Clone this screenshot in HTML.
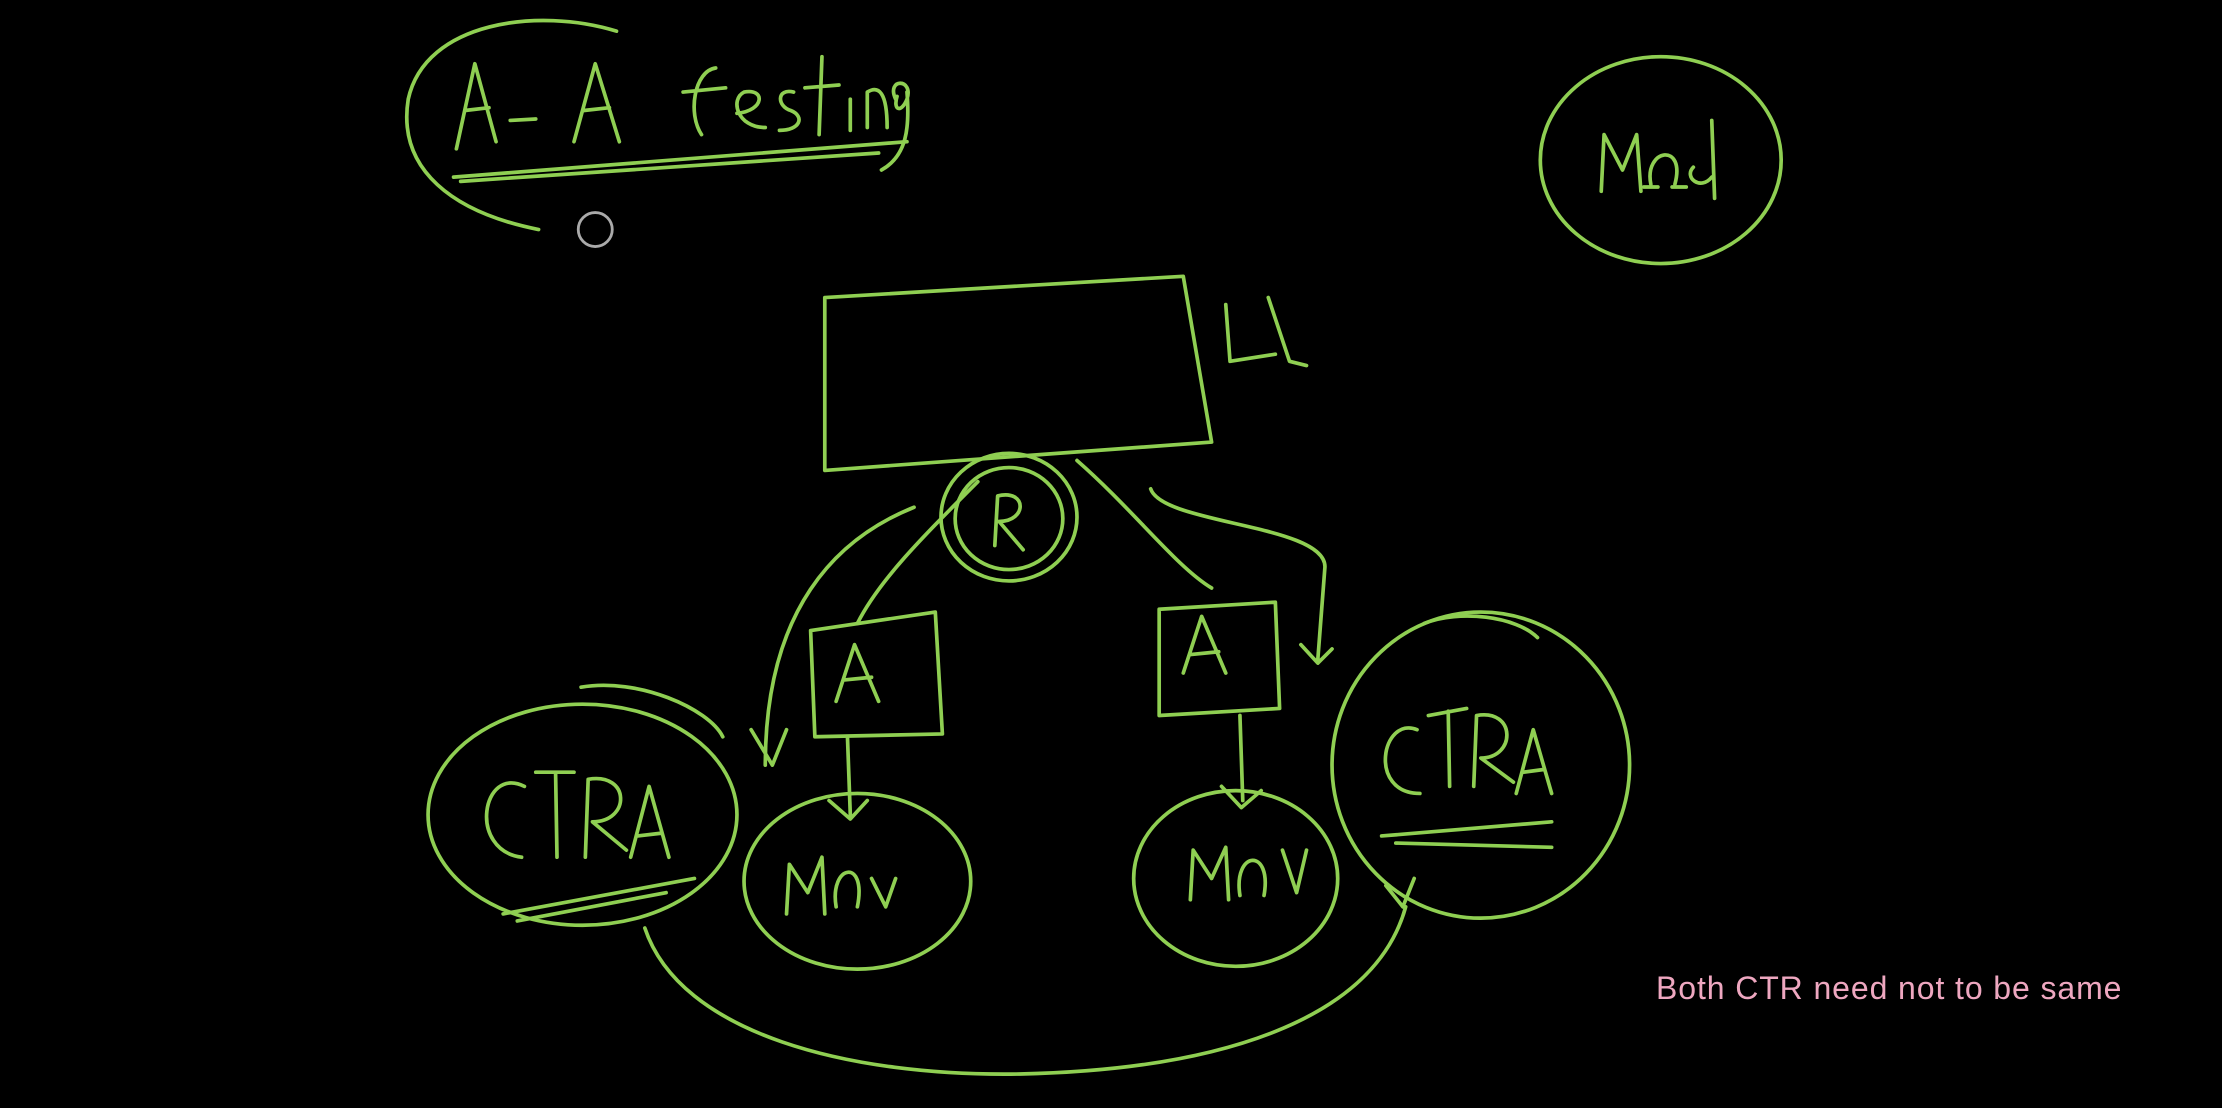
<!DOCTYPE html>
<html><head><meta charset="utf-8"><style>
html,body{margin:0;padding:0;background:#000;width:2222px;height:1108px;overflow:hidden;position:relative}
svg{position:absolute;left:0;top:0}
.t{position:absolute;left:1656px;top:970px;font:32px "Liberation Sans",sans-serif;color:#eea7c0;white-space:nowrap;letter-spacing:0.9px}
</style></head><body>
<svg width="2222" height="1108" viewBox="0 0 1568 782" fill="none" stroke="#8fcf52" stroke-width="2.6" stroke-linecap="round" stroke-linejoin="round">
<path d="M435 22 C380 5 300 15 288 70 C280 120 320 150 380 162"/>
<path d="M322 105 L335 45 L350 100 M328 78 L345 76"/>
<path d="M360 85 L378 84"/>
<path d="M405 100 L420 45 L437 100 M412 78 L430 76"/>
<path d="M495 95 C485 80 490 50 505 48 M482 65 L512 62"/>
<path d="M520 80 C540 78 540 62 525 65 C515 70 520 90 540 90"/>
<path d="M560 65 C548 62 548 75 558 78 C568 82 565 92 550 92"/>
<path d="M580 40 L578 95 M568 62 L592 60"/>
<path d="M600 70 L600 92"/>
<path d="M612 90 L612 65 C620 60 626 65 626 90"/>
<path d="M632 70 C625 55 645 55 640 70 C636 80 630 78 633 68 M640 65 C642 90 640 110 622 120"/>
<path d="M320 125 L640 100 M325 128 L620 108"/>
<circle cx="420" cy="162" r="12" stroke="#aaa" stroke-width="2"/>
<ellipse cx="1172" cy="113" rx="85" ry="73"/>
<path d="M1130 135 L1132 95 L1145 120 L1155 95 L1158 135"/>
<path d="M1165 130 C1160 105 1190 100 1182 130 M1160 132 L1170 132 M1180 132 L1190 132"/>
<path d="M1195 118 C1188 125 1200 135 1208 125 M1208 85 L1210 140"/>
<path d="M582 210 L835 195 L835 195 L855 312 L582 332 Z"/>
<path d="M865 215 L868 255 L900 250 M895 210 L910 255 L922 258"/>
<ellipse cx="712" cy="365" rx="48" ry="45"/>
<ellipse cx="712" cy="366" rx="38" ry="36"/>
<path d="M702 385 L704 350 C725 345 725 368 705 368 L722 388"/>
<path d="M645 358 C590 380 540 430 540 540 M530 515 L545 540 L555 515"/>
<path d="M690 340 C650 380 620 410 605 440"/>
<path d="M760 325 C800 360 830 400 855 415"/>
<path d="M812 345 C820 370 935 370 935 400 L930 465 M918 455 L930 468 L940 458"/>
<path d="M572 445 L660 432 L665 518 L575 520 Z"/>
<path d="M590 495 L603 455 L620 495 M595 480 L615 478"/>
<path d="M818 430 L900 425 L903 500 L818 505 Z"/>
<path d="M835 475 L848 435 L865 475 M840 462 L860 460"/>
<path d="M598 520 L600 575 M585 565 L600 578 L612 565"/>
<path d="M875 505 L877 565 M862 555 L876 570 L890 558"/>
<ellipse cx="411" cy="575" rx="109" ry="78"/>
<path d="M410 485 C450 478 500 500 510 520"/>
<path d="M370 555 C340 540 330 600 368 605"/>
<path d="M378 545 L405 545 M392 545 L393 605"/>
<path d="M413 605 L415 550 C445 545 445 580 418 580 L442 600"/>
<path d="M445 605 L458 555 L472 605 M450 590 L467 588"/>
<path d="M355 645 L490 620 M365 650 L470 630"/>
<ellipse cx="605" cy="622" rx="80" ry="62"/>
<path d="M555 645 L557 610 L570 630 L580 605 L582 645"/>
<path d="M590 640 C585 610 612 605 605 640"/>
<path d="M615 620 L625 640 L632 620"/>
<ellipse cx="872" cy="620" rx="72" ry="62"/>
<path d="M840 635 L842 600 L855 620 L865 598 L867 635"/>
<path d="M875 632 C870 600 898 598 892 632"/>
<path d="M905 600 L915 630 L922 600"/>
<ellipse cx="1045" cy="540" rx="105" ry="108"/>
<path d="M1005 440 C1030 430 1070 435 1085 450"/>
<path d="M1000 515 C975 505 965 560 1002 560"/>
<path d="M1008 505 L1035 500 M1022 502 L1023 555"/>
<path d="M1040 555 L1042 505 C1070 500 1070 535 1045 535 L1068 552"/>
<path d="M1070 560 L1082 515 L1095 560 M1075 545 L1090 543"/>
<path d="M975 590 L1095 580 M985 595 L1095 598"/>
<path d="M455 655 C480 730 600 760 720 758 C860 755 970 720 992 640 M978 625 L990 640 L998 620"/>
</svg>
<div class="t">Both CTR need not to be same</div>
</body></html>
